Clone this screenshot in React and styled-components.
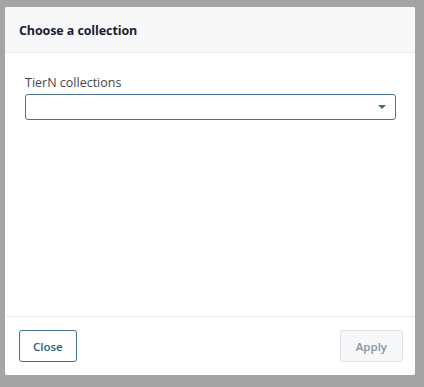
import React from 'react'
import styled, { createGlobalStyle } from 'styled-components';

const Global = createGlobalStyle`
html, body {
    margin: 0;
    padding: 0;
    background: #a5a5a5;
    height: 100%;
}
body {
    font-family: "Open Sans", "Noto Sans", sans-serif;
}
`;

const App = () => {
    return <Page>
        <Global />
        <Dialog>
            <Header>
                <Title>Choose a collection</Title>
            </Header>
            <Body>
                <Label htmlFor='collection'>TierN collections</Label>
                <SelectBox id='collection'>
                    <Arrow />
                </SelectBox>
            </Body>
            <Footer>
                <Button $variant={"outline"}>Close</Button>
                <Button $variant={"disabled"} disabled>Apply</Button>
            </Footer>
        </Dialog>
    </Page>
}

export default App

const Page = styled.div`
width: 424px;
height: 387px;
padding: 7px 9px 12px 5px;
box-sizing: border-box;
`;

const Dialog = styled.div`
width: 410px;
height: 368px;
background: #ffffff;
border-radius: 2px;
display: flex;
flex-direction: column;
overflow: hidden;
`;

const Header = styled.div`
height: 46px;
flex-shrink: 0;
display: flex;
align-items: center;
padding: 1px 14px 0;
box-sizing: border-box;
background: #f7f8fa;
border-bottom: 1px solid #e8ebf0;
`;

const Title = styled.h2`
margin: 0;
font-size: 12.5px;
font-weight: 700;
color: #1b2133;
letter-spacing: -0.1px;
`;

const Body = styled.div`
flex: 1;
padding: 22px 19px 0 20px;
display: flex;
flex-direction: column;
`;

const Label = styled.label`
font-size: 12.5px;
color: #44474c;
line-height: 16px;
margin-bottom: 3px;
`;

const SelectBox = styled.div`
position: relative;
height: 24px;
border: 1px solid #4b7591;
border-radius: 3px;
background: #fff;
`;

const Arrow = styled.span`
position: absolute;
right: 9px;
top: 10px;
width: 0;
height: 0;
border-left: 4px solid transparent;
border-right: 4px solid transparent;
border-top: 4px solid #3f6b87;
`;

const Footer = styled.div`
height: 58px;
flex-shrink: 0;
border-top: 1px solid #e8ebf0;
display: flex;
align-items: center;
justify-content: space-between;
padding: 0 12px 0 14px;
`;

const Button = styled.button`
height: 32px;
padding: 0 ${props => props.$variant === "outline" ? "13px" : "15px"};
font-family: inherit;
font-size: 11.5px;
font-weight: 600;
border-radius: 3px;
border: 1px solid ${props => props.$variant === "outline" ? "#3f6e8e" : "#dde2ea"};
background: ${props => props.$variant === "outline" ? "#fff" : "#f6f8fa"};
color: ${props => props.$variant === "outline" ? "#2f5d7a" : "#8994a3"};
cursor: ${props => props.disabled ? "default" : "pointer"};
`;
